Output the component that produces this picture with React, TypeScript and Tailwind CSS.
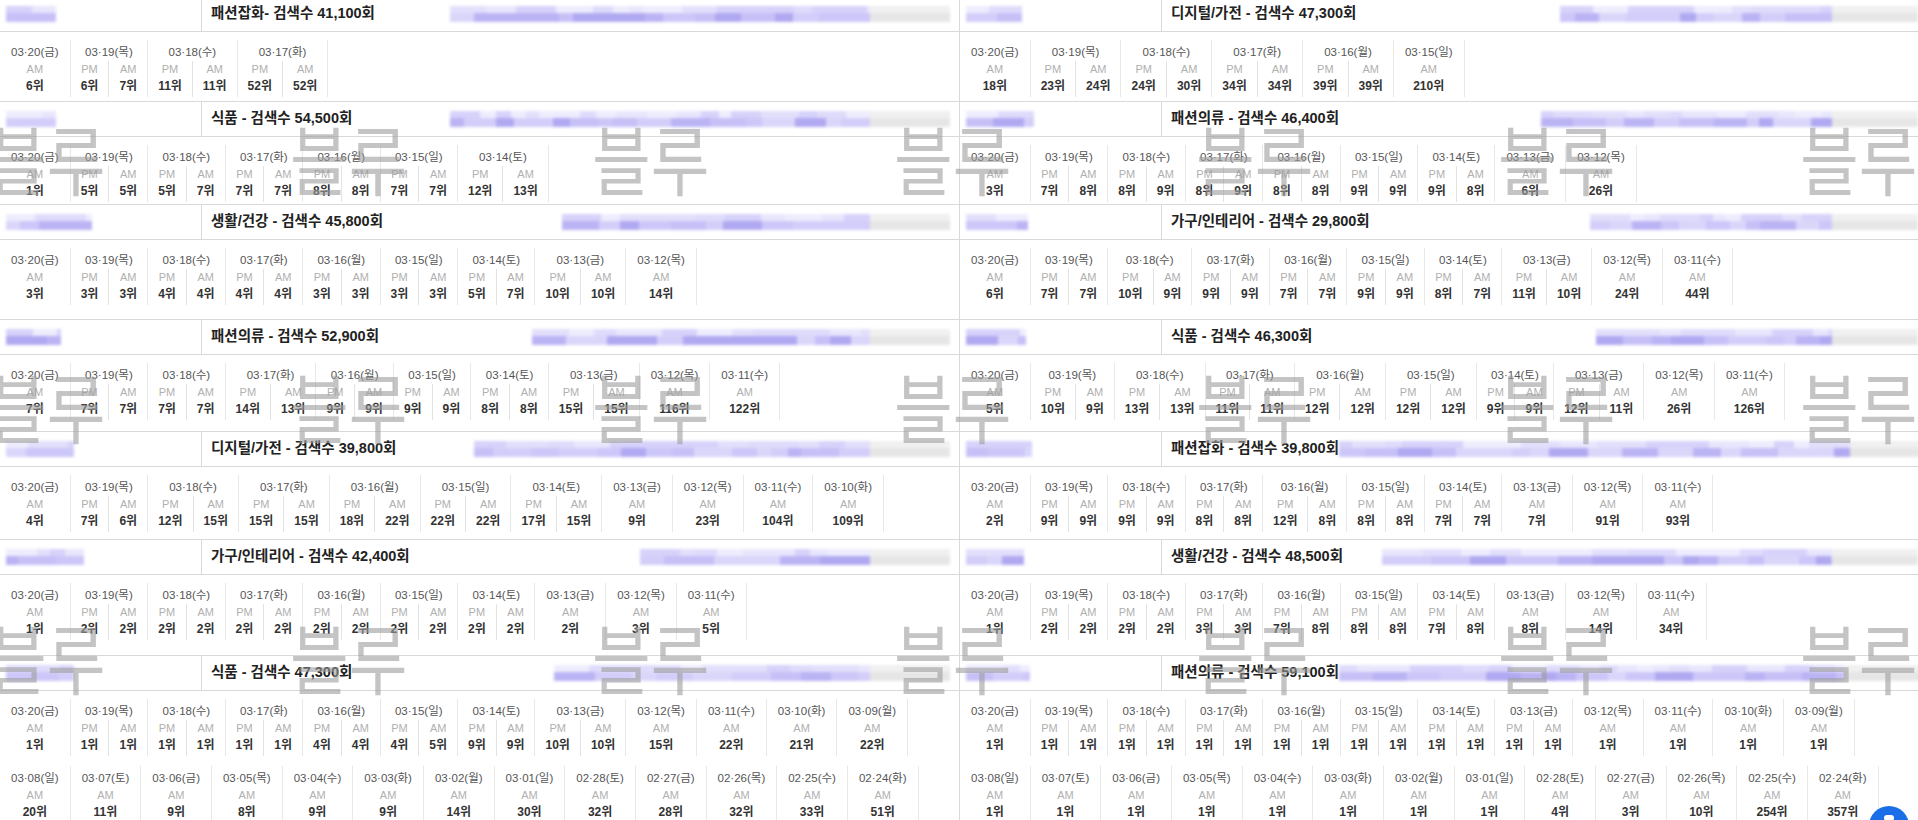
import React from 'react';

type Rank = number | [number, number];

const DATES = [
  '03·20(금)', '03·19(목)', '03·18(수)', '03·17(화)', '03·16(월)', '03·15(일)', '03·14(토)',
  '03·13(금)', '03·12(목)', '03·11(수)', '03·10(화)', '03·09(월)', '03·08(일)', '03·07(토)',
  '03·06(금)', '03·05(목)', '03·04(수)', '03·03(화)', '03·02(월)', '03·01(일)', '02·28(토)',
  '02·27(금)', '02·26(목)', '02·25(수)', '02·24(화)',
];

type Card = { title: string; ranks: Rank[]; blob: number; barStart: number; seed: number };

const LEFT: Card[] = [
  { title: '패션잡화- 검색수 41,100회', ranks: [6, [6, 7], [11, 11], [52, 52]], blob: 50, barStart: 450, seed: 11 },
  { title: '식품 - 검색수 54,500회', ranks: [1, [5, 5], [5, 7], [7, 7], [8, 8], [7, 7], [12, 13]], blob: 50, barStart: 450, seed: 23 },
  { title: '생활/건강 - 검색수 45,800회', ranks: [3, [3, 3], [4, 4], [4, 4], [3, 3], [3, 3], [5, 7], [10, 10], 14], blob: 86, barStart: 562, seed: 37 },
  { title: '패션의류 - 검색수 52,900회', ranks: [7, [7, 7], [7, 7], [14, 13], [9, 9], [9, 9], [8, 8], [15, 15], 116, 122], blob: 55, barStart: 532, seed: 41 },
  { title: '디지털/가전 - 검색수 39,800회', ranks: [4, [7, 6], [12, 15], [15, 15], [18, 22], [22, 22], [17, 15], 9, 23, 104, 109], blob: 68, barStart: 474, seed: 53 },
  { title: '가구/인테리어 - 검색수 42,400회', ranks: [1, [2, 2], [2, 2], [2, 2], [2, 2], [2, 2], [2, 2], 2, 3, 5], blob: 78, barStart: 640, seed: 67 },
  { title: '식품 - 검색수 47,300회', ranks: [1, [1, 1], [1, 1], [1, 1], [4, 4], [4, 5], [9, 9], [10, 10], 15, 22, 21, 22, 20, 11, 9, 8, 9, 9, 14, 30, 32, 28, 32, 33, 51], blob: 68, barStart: 554, seed: 79 },
];

const RIGHT: Card[] = [
  { title: '디지털/가전 - 검색수 47,300회', ranks: [18, [23, 24], [24, 30], [34, 34], [39, 39], 210], blob: 56, barStart: 1560, seed: 83 },
  { title: '패션의류 - 검색수 46,400회', ranks: [3, [7, 8], [8, 9], [8, 9], [8, 8], [9, 9], [9, 8], 6, 26], blob: 68, barStart: 1541, seed: 97 },
  { title: '가구/인테리어 - 검색수 29,800회', ranks: [6, [7, 7], [10, 9], [9, 9], [7, 7], [9, 9], [8, 7], [11, 10], 24, 44], blob: 62, barStart: 1590, seed: 101 },
  { title: '식품 - 검색수 46,300회', ranks: [5, [10, 9], [13, 13], [11, 11], [12, 12], [12, 12], [9, 9], [12, 11], 26, 126], blob: 60, barStart: 1596, seed: 113 },
  { title: '패션잡화 - 검색수 39,800회', ranks: [2, [9, 9], [9, 9], [8, 8], [12, 8], [8, 8], [7, 7], 7, 91, 93], blob: 66, barStart: 1321, seed: 127 },
  { title: '생활/건강 - 검색수 48,500회', ranks: [1, [2, 2], [2, 2], [3, 3], [7, 8], [8, 8], [7, 8], 8, 14, 34], blob: 58, barStart: 1382, seed: 131 },
  { title: '패션의류 - 검색수 59,100회', ranks: [1, [1, 1], [1, 1], [1, 1], [1, 1], [1, 1], [1, 1], [1, 1], 1, 1, 1, 1, 1, 1, 1, 1, 1, 1, 1, 1, 4, 3, 10, 254, 357], blob: 64, barStart: 1327, seed: 149 },
];

const ROW_H = ['h-[69px]', 'h-[67px]', 'h-[79px]', 'h-[76px]', 'h-[72px]', 'h-[80px]', 'h-[140px]'];

function rng(seed: number) {
  let s = seed * 7919 + 13;
  return () => {
    s = (s * 9301 + 49297) % 233280;
    return s / 233280;
  };
}

const PURPLE_TOP = ['#e8e6fc', '#dedbfb', '#eeedfd', '#d6d2fa', '#e2dffb'];
const PURPLE_BOT = ['#d3cef9', '#c6c0f7', '#bbb4f4', '#dad6fa', '#b0a9f1', '#ccc7f8'];

function Mosaic({ width, seed, tail }: { width: number; seed: number; tail: number }) {
  const r = rng(seed);
  const mk = (pal: string[]) => {
    const segs: { w: number; c: string }[] = [];
    let x = 0;
    const lim = width - tail;
    while (x < lim) {
      const w = Math.min(12 + Math.floor(r() * 30), lim - x);
      segs.push({ w, c: pal[Math.floor(r() * pal.length)] });
      x += w;
    }
    return segs;
  };
  const top = mk(PURPLE_TOP);
  const bot = mk(PURPLE_BOT);
  return (
    <div className="flex flex-col blur-[1.5px]" style={{ width }}>
      <div className="flex h-[7px]">
        {top.map((s, i) => (
          <div key={i} style={{ width: s.w, background: s.c }} />
        ))}
        {tail > 0 && <div className="bg-[#f0f0f0]" style={{ width: tail }} />}
      </div>
      <div className="flex h-[9px]">
        {bot.map((s, i) => (
          <div key={i} style={{ width: s.w, background: s.c }} />
        ))}
        {tail > 0 && <div className="bg-[#e6e6e6]" style={{ width: tail }} />}
      </div>
    </div>
  );
}

function DateItem({ d, r }: { d: string; r: Rank }) {
  const cols: [string, number][] = Array.isArray(r) ? [['PM', r[0]], ['AM', r[1]]] : [['AM', r]];
  return (
    <div className="flex h-[57px] shrink-0 flex-col border-r border-[#e8e8e8] pt-[3px]">
      <div className="h-[18px] whitespace-nowrap px-[11px] text-center text-[11.5px] leading-[18px] text-[#555]">{d}</div>
      <div className="flex flex-1 justify-center">
        {cols.map(([lab, v], i) => (
          <div
            key={i}
            className={
              i > 0
                ? 'flex flex-1 flex-col items-center border-l border-[#e3e3e3] px-[10px]'
                : 'flex flex-1 flex-col items-center px-[10px]'
            }
          >
            <div className="h-[17px] text-[11px] leading-[17px] text-[#b0b0b0]">{lab}</div>
            <div className="h-[17px] whitespace-nowrap text-[12px] font-bold leading-[17px] text-[#333]">{v}위</div>
          </div>
        ))}
      </div>
    </div>
  );
}

function CardView({ card, h, side }: { card: Card; h: string; side: 'L' | 'R' }) {
  const barEnd = side === 'L' ? 950 : 1918;
  const barW = barEnd - card.barStart;
  const lines: Rank[][] = card.ranks.length > 12 ? [card.ranks.slice(0, 12), card.ranks.slice(12)] : [card.ranks];
  return (
    <div className="flex flex-col border-b border-[#d9d9d9]">
      <div className="flex h-[35px] border-b border-[#d9d9d9]">
        <div className="flex w-[202px] shrink-0 items-center border-r border-[#d9d9d9] pl-[6px]">
          <Mosaic width={card.blob} seed={card.seed + 5} tail={0} />
        </div>
        <div
          className={
            side === 'L'
              ? 'flex flex-1 items-center justify-between pl-[9px] pr-[9px]'
              : 'flex flex-1 items-center justify-between pl-[9px]'
          }
        >
          <div className="whitespace-nowrap text-[14.5px] font-semibold text-[#222]">{card.title}</div>
          <Mosaic width={barW} seed={card.seed} tail={side === 'L' ? 80 : 86} />
        </div>
      </div>
      <div className={`${h} overflow-hidden`}>
        {lines.map((ln, li) => (
          <div key={li} className={li === 0 ? 'mt-[8px] flex' : 'mt-[10px] flex'}>
            {ln.map((r, i) => (
              <DateItem key={i} d={DATES[i + li * 12]} r={r} />
            ))}
          </div>
        ))}
      </div>
    </div>
  );
}

const WM_BANDS = ['top-[119px]', 'top-[367px]', 'top-[618px]'];
const WM_LEFT = ['left-[-12px]', 'left-[290px]', 'left-[592px]', 'left-[894px]', 'left-[1196px]', 'left-[1498px]', 'left-[1800px]'];

export default function App() {
  return (
    <div className="relative h-[820px] w-[1918px] overflow-hidden bg-white [font-family:'Liberation_Sans','Noto_Sans_CJK_KR',sans-serif]">
      <div className="mt-[-3px] flex flex-col">
        {LEFT.map((l, i) => (
          <div key={i} className="flex">
            <div className="w-[960px] shrink-0 border-r border-[#d9d9d9]">
              <CardView card={l} h={ROW_H[i]} side="L" />
            </div>
            <div className="min-w-0 flex-1">
              <CardView card={RIGHT[i]} h={ROW_H[i]} side="R" />
            </div>
          </div>
        ))}
      </div>

      <div className="pointer-events-none absolute inset-0">
        {WM_BANDS.map((t, bi) =>
          WM_LEFT.map((l, li) => (
            <div
              key={`${bi}-${li}`}
              className={`absolute ${t} ${l} origin-left scale-x-[0.84] whitespace-nowrap text-[76px] leading-none text-[#9c9c9c]/60 [font-family:'Noto_Sans_CJK_KR',sans-serif]`}
            >
              블루
            </div>
          ))
        )}
      </div>

      <div className="absolute left-[1869px] top-[806px] flex h-[40px] w-[40px] justify-center rounded-full bg-[#1a6fe8] pt-[9px]">
        <div className="h-[6px] w-[10px] rounded-full bg-white" />
      </div>
    </div>
  );
}
